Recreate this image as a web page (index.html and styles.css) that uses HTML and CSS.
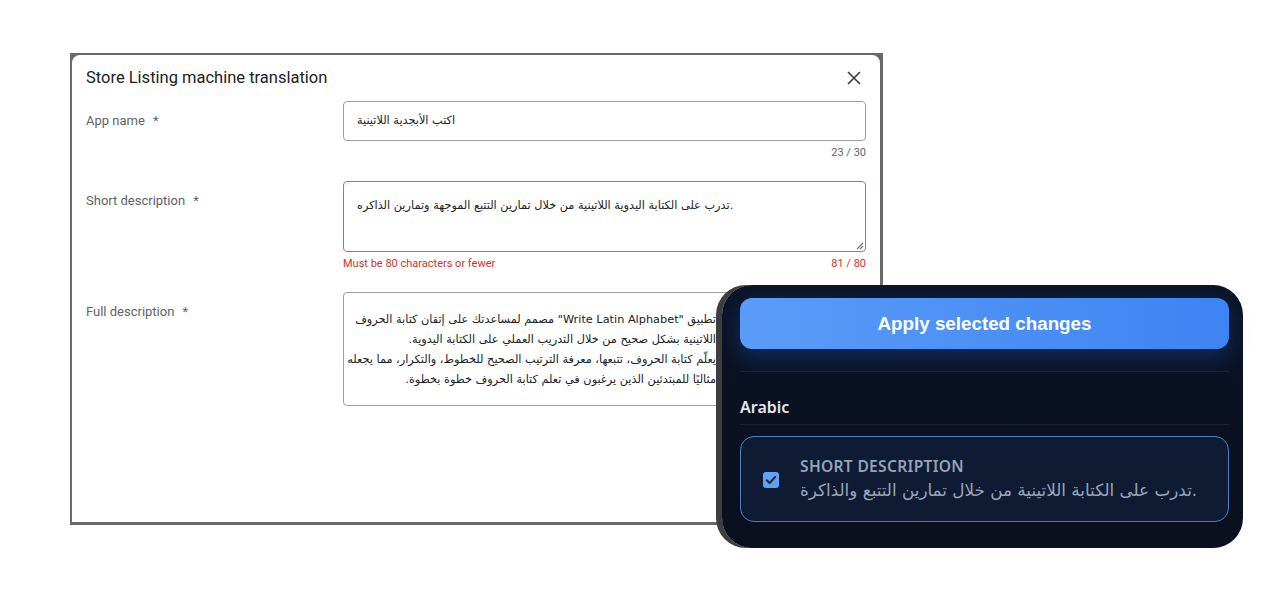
FILE: index.html
```html
<!DOCTYPE html>
<html lang="en">
<head>
<meta charset="utf-8">
<title>Store Listing machine translation</title>
<link rel="stylesheet" href="styles.css">
</head>
<body>
<div class="stage">
  <div class="shot">
    <div class="dialog">
      <div class="dlg-head">
        <h1 class="dlg-title">Store Listing machine translation</h1>
        <span class="close" aria-label="Close">
          <svg width="14" height="14" viewBox="0 0 14 14"><path d="M1 1 L13 13 M13 1 L1 13" stroke="#3c4043" stroke-width="1.7" fill="none"/></svg>
        </span>
      </div>

      <div class="row">
        <div class="label">App name <span class="req">*</span></div>
        <div class="field">
          <div class="input ar">اكتب الأبجدية اللاتينية</div>
          <div class="hint"><span></span><span>23 / 30</span></div>
        </div>
      </div>

      <div class="row">
        <div class="label">Short description <span class="req">*</span></div>
        <div class="field">
          <div class="textarea short error ar">تدرب على الكتابة اليدوية اللاتينية من خلال تمارين التتبع الموجهة وتمارين الذاكره.
            <svg class="grip" width="9" height="9" viewBox="0 0 9 9"><path d="M8 2 L2 8 M8 5 L5 8" stroke="#777" stroke-width="1.1"/></svg>
          </div>
          <div class="hint err"><span>Must be 80 characters or fewer</span><span>81 / 80</span></div>
        </div>
      </div>

      <div class="row">
        <div class="label">Full description <span class="req">*</span></div>
        <div class="field">
          <div class="textarea full ar">
            <div class="line">تطبيق "Write Latin Alphabet" مصمم لمساعدتك على إتقان كتابة الحروف</div>
            <div class="line">اللاتينية بشكل صحيح من خلال التدريب العملي على الكتابة اليدوية.</div>
            <div class="line">يعلّم كتابة الحروف، تتبعها، معرفة الترتيب الصحيح للخطوط، والتكرار، مما يجعله</div>
            <div class="line">مثاليًا للمبتدئين الذين يرغبون في تعلم كتابة الحروف خطوة بخطوة.</div>
          </div>
        </div>
      </div>
    </div>
  </div>

  <div class="panel">
    <button class="apply">Apply selected changes</button>
    <div class="divider first"></div>
    <div class="lang">Arabic</div>
    <div class="divider"></div>
    <div class="card">
      <span class="check">
        <svg width="16" height="16" viewBox="0 0 16 16"><rect x="0" y="0" width="16" height="16" rx="3" fill="#5fa3f7"/><path d="M3.8 8.3 L6.6 11 L12.2 5" stroke="#1f2937" stroke-width="2" fill="none" stroke-linecap="round" stroke-linejoin="round"/></svg>
      </span>
      <div class="card-body">
        <div class="card-title">SHORT DESCRIPTION</div>
        <div class="card-text">تدرب على الكتابة اللاتينية من خلال تمارين التتبع والذاكرة.</div>
      </div>
    </div>
  </div>
</div>
</body>
</html>
```

FILE: styles.css
```css
* { box-sizing: border-box; }

html, body {
  margin: 0;
  padding: 0;
  background: #ffffff;
}

body {
  font-family: Roboto, "Liberation Sans", "DejaVu Sans", sans-serif;
  width: 1280px;
  height: 600px;
  overflow: hidden;
}

.stage {
  position: relative;
  padding: 53px 0 0 70px;
}

/* screenshot of the dialog */
.shot {
  width: 813px;
  height: 472px;
  background: #6a6a6a;
  padding: 2px 3px 3px 2px;
}

.dialog {
  background: #ffffff;
  height: 100%;
  border-radius: 8px 8px 0 0;
  padding: 0 14px 0 14px;
  overflow: hidden;
}

.dlg-head {
  height: 34px;
  padding-top: 13px;
  display: flex;
  justify-content: space-between;
  align-items: flex-start;
}

.dlg-title {
  margin: 0;
  font-size: 16.5px;
  line-height: 20px;
  font-weight: 400;
  color: #202124;
}

.close {
  display: flex;
  margin-top: 3px;
  margin-right: 5px;
}

.row {
  display: flex;
  margin-top: 12px;
}
.row + .row { margin-top: 22px; }

.label {
  width: 257px;
  flex: none;
  padding-top: 12px;
  font-size: 13px;
  line-height: 16px;
  color: #5f6368;
}
.req { margin-left: 5px; }

.field {
  width: 523px;
  flex: none;
}

.ar {
  font-family: "DejaVu Sans", "Liberation Sans", sans-serif;
  font-size: 11.3px;
  color: #202124;
}

.input {
  height: 40px;
  border: 1px solid #9aa0a6;
  border-radius: 4px;
  padding: 0 13px;
  line-height: 38px;
}

.textarea {
  position: relative;
  border: 1px solid #9aa0a6;
  border-radius: 4px;
  padding: 14px 13px 0 13px;
  line-height: 20px;
}

.textarea.short { height: 71px; }
.textarea.error { border-color: #e35d5d; }

.grip {
  position: absolute;
  right: 1px;
  bottom: 1px;
}

.textarea.full {
  height: 114px;
  padding: 17px 149px 0 13px;
  overflow: hidden;
  direction: rtl;
}
.line {
  white-space: nowrap;
  line-height: 20px;
  text-align: right;
}

.hint {
  display: flex;
  justify-content: space-between;
  margin-top: 5px;
  font-size: 11px;
  line-height: 13px;
  color: #5f6368;
}
.hint.err { color: #d93025; }

/* overlay panel */
.panel {
  position: absolute;
  left: 722px;
  top: 285px;
  width: 521px;
  height: 263px;
  border-radius: 30px;
  background: linear-gradient(180deg, #0c1629 0%, #0a1120 45%, #0a101d 100%);
  box-shadow: -6px 0 0 #3e3e3e;
  padding: 13px 14px 0 18px;
}

.apply {
  display: block;
  width: 100%;
  height: 51px;
  border: none;
  border-radius: 12px;
  background: linear-gradient(90deg, #5a9cf8 0%, #4b8ff5 55%, #3e83f2 100%);
  color: #ffffff;
  font-family: "Liberation Sans", Arial, sans-serif;
  font-weight: 700;
  font-size: 18.8px;
  box-shadow: 0 10px 22px rgba(37, 99, 235, 0.28);
}

.divider {
  height: 1px;
  background: #1b2538;
  margin-top: 6px;
}
.divider.first { margin-top: 22px; }

.lang {
  margin-top: 24px;
  font-family: "Noto Sans", "Open Sans", sans-serif;
  font-weight: 600;
  font-size: 16px;
  line-height: 22px;
  color: #e5e7eb;
}

.card {
  margin-top: 11px;
  height: 86px;
  border: 1px solid #4d7fc4;
  border-radius: 14px;
  background: #0f1b32;
  display: flex;
  align-items: center;
  padding: 0 22px;
  gap: 21px;
}

.check { display: flex; margin-top: 2px; }

.card-body { display: flex; flex-direction: column; }

.card-title {
  font-family: "Noto Sans", "Open Sans", sans-serif;
  font-weight: 600;
  font-size: 15.6px;
  line-height: 22px;
  letter-spacing: 0.3px;
  color: #94a3b8;
}

.card-text {
  font-family: "DejaVu Sans", "Noto Sans", sans-serif;
  font-size: 16.8px;
  line-height: 26px;
  color: #9aa6b8;
}
```
